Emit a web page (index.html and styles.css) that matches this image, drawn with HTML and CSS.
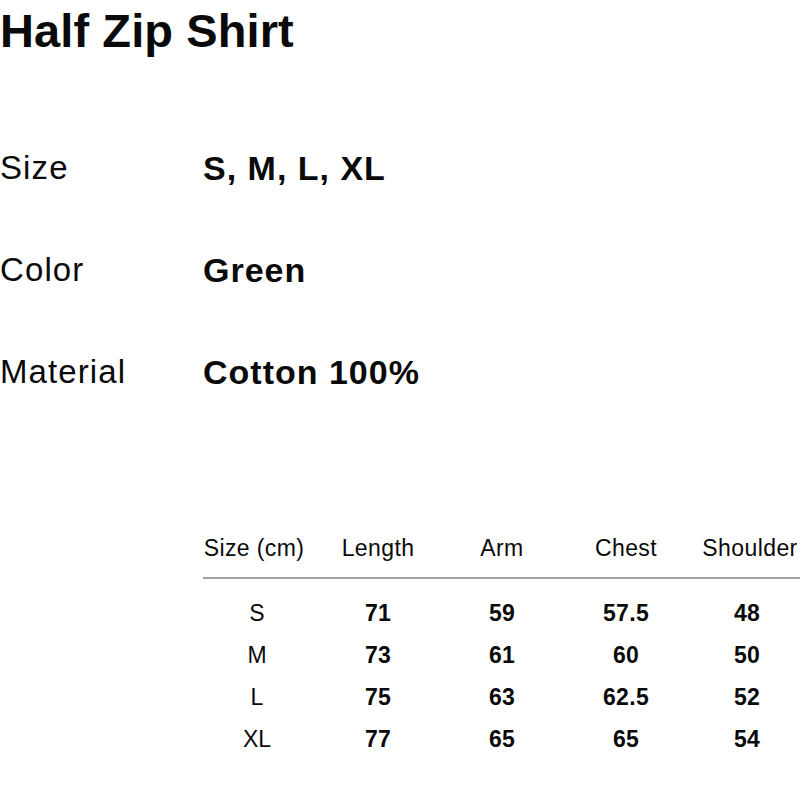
FILE: index.html
```html
<!DOCTYPE html>
<html lang="en">
<head>
<meta charset="utf-8">
<title>Half Zip Shirt</title>
<link rel="stylesheet" href="styles.css">
</head>
<body>
<main class="page">
  <h1 class="title">Half Zip Shirt</h1>

  <dl class="specs">
    <dt class="spec-label">Size</dt>
    <dd class="spec-value">S, M, L, XL</dd>
    <dt class="spec-label">Color</dt>
    <dd class="spec-value">Green</dd>
    <dt class="spec-label">Material</dt>
    <dd class="spec-value">Cotton 100%</dd>
  </dl>

  <div class="size-table">
    <div class="head">Size (cm)</div>
    <div class="head">Length</div>
    <div class="head">Arm</div>
    <div class="head">Chest</div>
    <div class="head">Shoulder</div>
    <div class="divider"></div>

    <div class="size">S</div><div class="num">71</div><div class="num">59</div><div class="num">57.5</div><div class="num last">48</div>
    <div class="size">M</div><div class="num">73</div><div class="num">61</div><div class="num">60</div><div class="num last">50</div>
    <div class="size">L</div><div class="num">75</div><div class="num">63</div><div class="num">62.5</div><div class="num last">52</div>
    <div class="size">XL</div><div class="num">77</div><div class="num">65</div><div class="num">65</div><div class="num last">54</div>
  </div>
</main>
</body>
</html>
```

FILE: styles.css
```css
html, body {
  margin: 0;
  padding: 0;
  background: #ffffff;
  overflow: hidden;
}

.page {
  width: 800px;
  height: 800px;
  overflow: hidden;
  font-family: "Liberation Sans", Arial, sans-serif;
  color: #0a0a0a;
}

.title {
  margin: 3px 0 0 0;
  font-size: 47px;
  line-height: 56px;
  font-weight: 700;
  letter-spacing: 0.1px;
}

.specs {
  margin: 58px 0 0 0;
  display: grid;
  grid-template-columns: 203px auto;
  grid-auto-rows: 102px;
  font-size: 33px;
  line-height: 102px;
}

.spec-label {
  margin: 0;
  font-weight: 400;
  letter-spacing: 1.1px;
}

.spec-value {
  margin: 0;
  font-size: 34px;
  font-weight: 700;
  letter-spacing: 1px;
}

.size-table {
  margin: 110px 0 0 192px;
  display: grid;
  grid-template-columns: repeat(5, 124px);
  font-size: 23px;
  text-align: center;
}

.head {
  line-height: 30px;
  padding-bottom: 14px;
  font-weight: 400;
  letter-spacing: 0.4px;
  white-space: nowrap;
}

.divider {
  grid-column: 1 / -1;
  height: 2px;
  margin: 0 0 13px 11px;
  background: #a3a3a3;
}

.size {
  line-height: 42px;
  font-weight: 400;
  padding-left: 6px;
}

.num {
  line-height: 42px;
  font-weight: 700;
  letter-spacing: 0.3px;
}

.num.last {
  padding-right: 6px;
}
```
